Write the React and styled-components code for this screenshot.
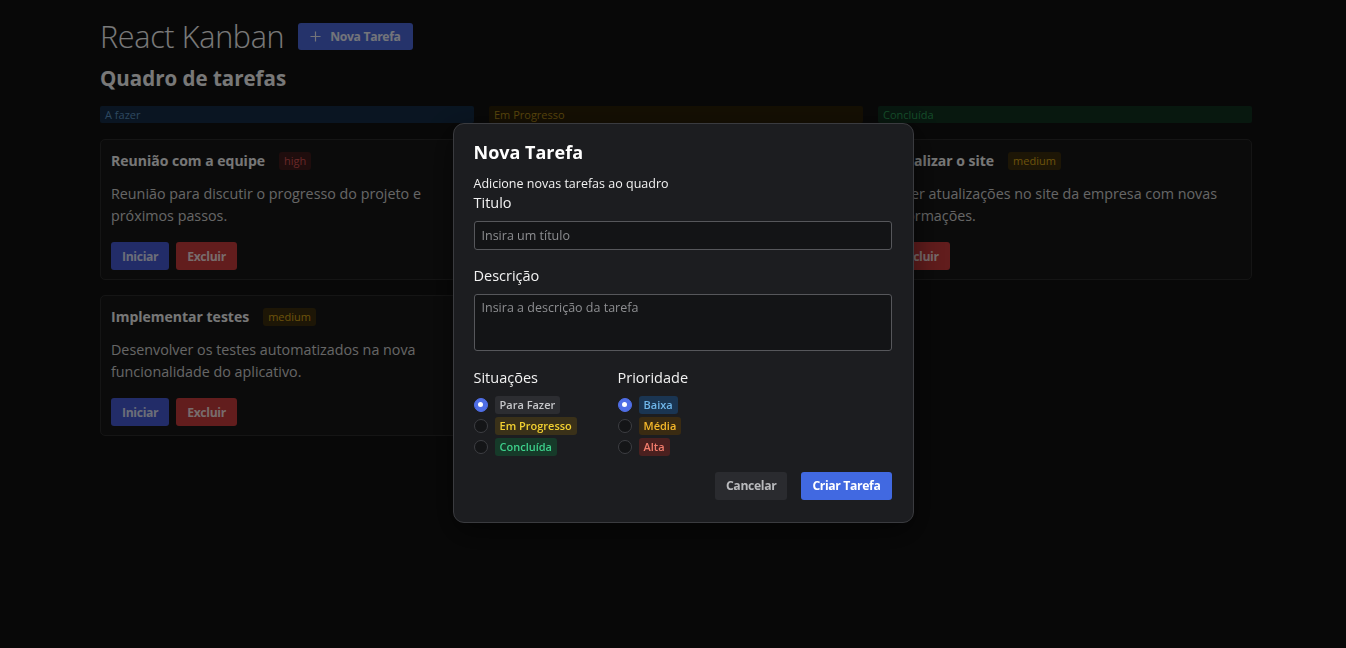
import React from "react";
import styled, { createGlobalStyle } from "styled-components";

const Global = createGlobalStyle`
  * { box-sizing: border-box; }
  html, body { margin: 0; padding: 0; background: #111111; }
  body { font-family: "Open Sans", "Noto Sans", sans-serif; color: #eeeeee; }
`;

const Page = styled.div`
  width: 1152px;
  margin: 0 0 0 100px;
  padding-top: 14px;
`;

const Header = styled.header`
  display: flex;
  align-items: center;
  gap: 14px;
  height: 44px;
`;

const AppTitle = styled.h1`
  margin: 0;
  font-size: 30.5px;
  font-weight: 300;
  color: #f4f4f4;
  letter-spacing: -0.3px;
`;

const Button = styled.button`
  display: inline-flex;
  align-items: center;
  gap: ${(p) => (p.$icon ? "9px" : "0")};
  height: ${(p) => p.$h || 28}px;
  padding: 0 ${(p) => p.$px || 11}px;
  border: none;
  border-radius: 3px;
  background: ${(p) => p.$bg};
  color: ${(p) => p.$fg || "#ffffff"};
  font-family: inherit;
  font-size: 12.2px;
  font-weight: 700;
  letter-spacing: -0.35px;
  cursor: pointer;
`;

const BoardTitle = styled.h2`
  margin: 6px 0 0;
  font-size: 20.5px;
  font-weight: 700;
  color: #f0f0f0;
  line-height: 28px;
`;

const Columns = styled.div`
  display: grid;
  grid-template-columns: repeat(3, 1fr);
  gap: 15px;
  margin-top: 14px;
`;

const Column = styled.section`
  display: flex;
  flex-direction: column;
  gap: 15px;
`;

const ColumnHead = styled.div`
  height: 17px;
  padding: 0 5px;
  border-radius: 2px;
  background: ${(p) => p.$bg};
  color: ${(p) => p.$fg};
  font-size: 11px;
  font-weight: 500;
  line-height: 17px;
  margin-bottom: 1px;
`;

const Card = styled.article`
  border: 1px solid #2a2a2a;
  border-radius: 5px;
  background: #171717;
  padding: 10px 10px 9px;
`;

const CardTop = styled.div`
  display: flex;
  align-items: center;
  gap: 14px;
  height: 21px;
`;

const CardTitle = styled.h3`
  margin: 0;
  font-size: 14px;
  font-weight: 700;
  color: #eeeeee;
`;

const Tag = styled.span`
  display: inline-block;
  padding: 0 5px;
  height: 18px;
  line-height: 18px;
  border-radius: 3px;
  background: ${(p) => p.$bg};
  color: ${(p) => p.$fg};
  font-size: 11px;
  font-weight: ${(p) => p.$w || 600};
`;

const CardText = styled.p`
  margin: 12px 0 0;
  font-size: 14.3px;
  line-height: 22px;
  color: #cccccc;
`;

const CardActions = styled.div`
  display: flex;
  gap: 7px;
  margin-top: 15px;
`;

const Overlay = styled.div`
  position: fixed;
  inset: 0;
  background: rgba(0, 0, 0, 0.5);
  display: flex;
  align-items: center;
  justify-content: center;
  padding: 0 0 3px 20px;
`;

const Modal = styled.div`
  width: 461px;
  border: 1px solid #3a3b3f;
  border-radius: 11px;
  background: #1c1d20;
  padding: 15px 21px 22px 20px;
  box-shadow: 0 10px 30px rgba(0, 0, 0, 0.5);
`;

const ModalTitle = styled.h2`
  margin: 0;
  font-size: 18px;
  line-height: 27px;
  font-weight: 700;
  color: #ffffff;
`;

const ModalSub = styled.p`
  margin: 9px 0 0;
  font-size: 12.5px;
  line-height: 18px;
  color: #f2f2f2;
`;

const Label = styled.label`
  display: block;
  margin-top: ${(p) => p.$mt || 0}px;
  font-size: 14.5px;
  line-height: 20px;
  color: #f2f2f2;
`;

const fieldCss = `
  display: block;
  width: 100%;
  margin-top: 8px;
  border: 1px solid #56575b;
  border-radius: 3px;
  background: #131416;
  color: #eeeeee;
  font-family: inherit;
  font-size: 12.5px;
  padding: 4px 7px;
  outline: none;
  &::placeholder { color: #8d8e91; }
`;

const Input = styled.input`
  ${fieldCss}
  height: 29px;
`;

const TextArea = styled.textarea`
  ${fieldCss}
  height: 57px;
  resize: none;
  line-height: 18px;
`;

const Options = styled.div`
  display: grid;
  grid-template-columns: 144px 1fr;
  margin-top: 17px;
`;

const RadioList = styled.div`
  display: flex;
  flex-direction: column;
  gap: 3px;
  margin-top: 8px;
`;

const RadioRow = styled.div`
  display: flex;
  align-items: center;
  gap: 7px;
  height: 18px;
`;

const Radio = styled.span`
  width: 14px;
  height: 14px;
  border-radius: 50%;
  flex: none;
  background: ${(p) => (p.$on ? "#4f6ee6" : "#141517")};
  border: 1px solid ${(p) => (p.$on ? "#4f6ee6" : "#3d3e42")};
  display: flex;
  align-items: center;
  justify-content: center;
  &::after {
    content: "";
    display: ${(p) => (p.$on ? "block" : "none")};
    width: 5px;
    height: 5px;
    border-radius: 50%;
    background: #ffffff;
  }
`;

const Footer = styled.div`
  display: flex;
  justify-content: flex-end;
  gap: 14px;
  margin-top: 16px;
`;

const PlusIcon = () => (
  <svg width="11" height="11" viewBox="0 0 12 12" fill="none" stroke="currentColor" strokeWidth="1.3">
    <path d="M6 0.5v11M0.5 6h11" />
  </svg>
);

const columns = [
  {
    name: "A fazer",
    bg: "#142b44",
    fg: "#5b8fbf",
    start: true,
    cards: [
      {
        title: "Reunião com a equipe",
        tag: "high",
        text: "Reunião para discutir o progresso do projeto e próximos passos.",
      },
      {
        title: "Implementar testes",
        tag: "medium",
        text: "Desenvolver os testes automatizados na nova funcionalidade do aplicativo.",
      },
    ],
  },
  { name: "Em Progresso", bg: "#2a1f08", fg: "#b08a18", cards: [] },
  {
    name: "Concluída",
    bg: "#10301f",
    fg: "#2a9a55",
    start: false,
    cards: [
      {
        title: "Atualizar o site",
        tag: "medium",
        text: "Fazer atualizações no site da empresa com novas informações.",
      },
    ],
  },
];

const tagColors = {
  high: { bg: "#3e1a1a", fg: "#d05050" },
  medium: { bg: "#3b2c0c", fg: "#d6a418" },
};

const situations = [
  { label: "Para Fazer", bg: "#2c2d31", fg: "#c6c7ca", on: true },
  { label: "Em Progresso", bg: "#3a3119", fg: "#f2d031" },
  { label: "Concluída", bg: "#163a29", fg: "#3dd08b" },
];

const priorities = [
  { label: "Baixa", bg: "#1a3552", fg: "#6fb6ea", on: true },
  { label: "Média", bg: "#3a2b12", fg: "#f5b82a" },
  { label: "Alta", bg: "#4a201f", fg: "#f27c6c" },
];

export default function App() {
  return (
    <>
      <Global />
      <Page>
        <Header>
          <AppTitle>React Kanban</AppTitle>
          <Button $bg="#4a66d6" $fg="#e6e9f5" $icon $h={27} $px={12}>
            <PlusIcon />
            Nova Tarefa
          </Button>
        </Header>
        <BoardTitle>Quadro de tarefas</BoardTitle>
        <Columns>
          {columns.map((col) => (
            <Column key={col.name}>
              <ColumnHead $bg={col.bg} $fg={col.fg}>
                {col.name}
              </ColumnHead>
              {col.cards.map((c) => (
                <Card key={c.title}>
                  <CardTop>
                    <CardTitle>{c.title}</CardTitle>
                    <Tag $bg={tagColors[c.tag].bg} $fg={tagColors[c.tag].fg} $w={500}>
                      {c.tag}
                    </Tag>
                  </CardTop>
                  <CardText>{c.text}</CardText>
                  <CardActions>
                    {col.start && (
                      <Button $bg="#4559d0" $fg="#d8dcf0">Iniciar</Button>
                    )}
                    <Button $bg="#c43a3a" $fg="#f0d8d8">Excluir</Button>
                  </CardActions>
                </Card>
              ))}
            </Column>
          ))}
        </Columns>
      </Page>
      <Overlay>
        <Modal>
          <ModalTitle>Nova Tarefa</ModalTitle>
          <ModalSub>Adicione novas tarefas ao quadro</ModalSub>
          <Label>Titulo</Label>
          <Input placeholder="Insira um título" />
          <Label $mt={16}>Descrição</Label>
          <TextArea placeholder="Insira a descrição da tarefa" />
          <Options>
            <div>
              <Label>Situações</Label>
              <RadioList>
                {situations.map((s) => (
                  <RadioRow key={s.label}>
                    <Radio $on={s.on} />
                    <Tag $bg={s.bg} $fg={s.fg}>{s.label}</Tag>
                  </RadioRow>
                ))}
              </RadioList>
            </div>
            <div>
              <Label>Prioridade</Label>
              <RadioList>
                {priorities.map((s) => (
                  <RadioRow key={s.label}>
                    <Radio $on={s.on} />
                    <Tag $bg={s.bg} $fg={s.fg}>{s.label}</Tag>
                  </RadioRow>
                ))}
              </RadioList>
            </div>
          </Options>
          <Footer>
            <Button $bg="#2a2b2f" $fg="#b9babd">Cancelar</Button>
            <Button $bg="#4169e1">Criar Tarefa</Button>
          </Footer>
        </Modal>
      </Overlay>
    </>
  );
}
